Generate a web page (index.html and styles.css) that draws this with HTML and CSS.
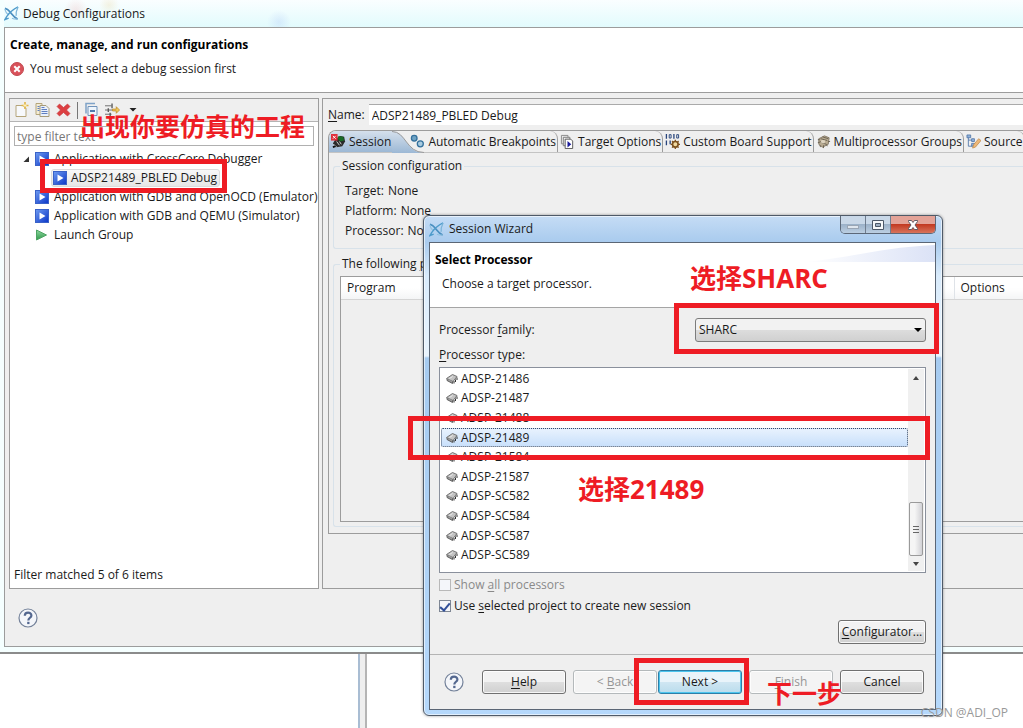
FILE: index.html
```html
<!DOCTYPE html>
<html lang="en">
<head>
    <meta charset="UTF-8">
    <meta name="viewport" content="width=device-width, initial-scale=1.0">
    <title>Debug Configurations</title>
    <link rel="stylesheet" href="styles.css">
</head>
<body>
    <!-- Shared icons -->
    <svg class="sprite" aria-hidden="true">
        <defs>
            <linearGradient id="blueFill" x1="0" y1="0" x2="1" y2="1">
                <stop offset="0" stop-color="#6f9cf0"/>
                <stop offset="1" stop-color="#0a35c8"/>
            </linearGradient>
            <linearGradient id="greenFill" x1="0" y1="0" x2="0" y2="1">
                <stop offset="0" stop-color="#8fd6a0"/>
                <stop offset="1" stop-color="#2f9a4a"/>
            </linearGradient>
        </defs>
        <symbol id="logo" viewBox="0 0 16 16">
            <path d="M1 2.500c3 .5 4 2 6 4.500s4 5.500 7.500 7" fill="none" stroke="#4a8fc0" stroke-width="1.800"/>
            <path d="M1 3c.5 3 2 5.500 4.500 6.500M8.500 13c2 1 4 1.200 6 1" fill="none" stroke="#8fc0df" stroke-width="1.200"/>
            <path d="M15 1C10 3.500 5.500 7.500 3 11l-2 3.500 4-1.500" fill="none" stroke="#4e9bcb" stroke-width="1.500"/>
            <path d="M15 1c-1.500 3-2.500 6-2 9.500" fill="none" stroke="#7ab4d8" stroke-width="1.300"/>
        </symbol>
        <symbol id="launch" viewBox="0 0 14 14">
            <rect x=".5" y=".5" width="13" height="13" fill="url(#blueFill)" stroke="#3a62c8"/>
            <path d="M4.500 3.500l6 3.500-6 3.500z" fill="#fff"/>
        </symbol>
        <symbol id="help" viewBox="0 0 20 20">
            <circle cx="10" cy="10" r="9" fill="#f4f6fa" stroke="#74829a" stroke-width="1.200"/>
            <path d="M6.800 7.800c0-4.200 6.600-4 6.600-.4 0 2.400-3.100 2.400-3.100 5.200" fill="none" stroke="#53678f" stroke-width="2.200"/>
            <rect x="9.200" y="13.800" width="2.300" height="2.300" fill="#53678f"/>
        </symbol>
        <symbol id="chip" viewBox="0 0 12 12">
            <path d="M.5 5.500l6-4 4.500 2-4 5z" fill="#c4c4c4" stroke="#6a6a6a" stroke-width=".9"/>
            <path d="M1 6v1.500l5.500 3V8.500" fill="#9a9a9a" stroke="#555" stroke-width=".9"/>
            <path d="M8 8v2.500M9.500 6.500V9M11 4.500V7" fill="none" stroke="#2e2e2e" stroke-width="1"/>
            <path d="M3.500 5.500l3-2" stroke="#f2f2f2" stroke-width=".9"/>
        </symbol>
    </svg>

    <div class="desktop">
        <main class="window">
            <header class="title-bar">
                <svg class="icon-logo"><use href="#logo"/></svg>
                <span>Debug Configurations</span>
            </header>

            <div class="window-body">
                <div class="banner">
                    <h1>Create, manage, and run configurations</h1>
                    <p class="error-line">
                        <svg class="icon-error" viewBox="0 0 14 14">
                            <circle cx="7" cy="7" r="6.500" fill="#d9515a" stroke="#c04a50"/>
                            <path d="M4.300 4.300l5.400 5.400M9.700 4.300l-5.400 5.400" stroke="#fff" stroke-width="2"/>
                        </svg>
                        You must select a debug session first
                    </p>
                </div>

                <div class="panes">
                    <!-- Configuration list -->
                    <section class="tree-pane">
                        <div class="toolbar">
                            <button aria-label="New configuration">
                                <svg viewBox="0 0 14 16"><path d="M1.500 3.500h7l3 3v8h-10z" fill="#f7f9fc" stroke="#b5a57a"/><path d="M10.500 0v7M7 3.500h7" stroke="#e2b545" stroke-width="1.600"/><path d="M10.500 2v3M9 3.500h3" stroke="#fff2b8"/></svg>
                            </button>
                            <button aria-label="Duplicate">
                                <svg viewBox="0 0 14 16"><path d="M.5 1.500h6v11h-6z" fill="#f3ecd5" stroke="#b5a57a"/><path d="M4.500 3.500h6l3 3v8h-9z" fill="#e9f0fb" stroke="#a79b78"/><path d="M6 7.500h5.500M6 9.500h6M6 11.500h6M6 5.500h3M2 4.500h2M2 6.500h2M2 8.500h2" stroke="#5f7fc0"/></svg>
                            </button>
                            <button aria-label="Delete">
                                <svg viewBox="0 0 14 16"><path d="M3 2l4 3.500L11 2l2.500 2.500L10 8l3.500 3.500L11 14l-4-3.500L3 14 .5 11.500 4 8 .5 4.500z" fill="#dc3f42" stroke="#c23336" stroke-width=".6"/></svg>
                            </button>
                            <span class="tool-divider"></span>
                            <button aria-label="Collapse all">
                                <svg viewBox="0 0 14 16"><path d="M1.500 11.500v-10h9" fill="none" stroke="#7fa3c8" stroke-width="1.500"/><path d="M3.500 4.500h9v9h-9z" fill="#eef5fc" stroke="#6f93bb"/><path d="M5.500 9h5" stroke="#1c4f8f" stroke-width="1.500"/></svg>
                            </button>
                            <button aria-label="Filter">
                                <svg viewBox="0 0 16 16"><path d="M0 3.500h7M0 8h8M0 12.500h7" stroke="#6a6a6a"/><path d="M7.500 1v5M5.500 11v5M3.500 6v4" stroke="#555" stroke-width="1.400"/><path d="M8 7h4V4.500l3.500 3.500-3.500 3.500V9H8z" fill="#f0c65b" stroke="#bb8a24" stroke-width=".8"/></svg>
                            </button>
                            <button aria-label="Filter menu">
                                <svg viewBox="0 0 14 16"><path d="M3 6h7l-3.500 3.500z" fill="#222"/></svg>
                            </button>
                        </div>

                        <input class="filter" type="text" placeholder="type filter text" aria-label="type filter text">

                        <ul class="tree">
                            <li>
                                <svg class="twisty" viewBox="0 0 8 8"><path d="M7 1.500V7H1.500z" fill="#333"/></svg>
                                <svg class="icon-node"><use href="#launch"/></svg>
                                <span>Application with CrossCore Debugger</span>
                            </li>
                            <li class="child">
                                <span class="picked">
                                    <svg class="icon-node"><use href="#launch"/></svg>
                                    ADSP21489_PBLED Debug
                                </span>
                            </li>
                            <li>
                                <svg class="icon-node"><use href="#launch"/></svg>
                                <span>Application with GDB and OpenOCD (Emulator)</span>
                            </li>
                            <li>
                                <svg class="icon-node"><use href="#launch"/></svg>
                                <span>Application with GDB and QEMU (Simulator)</span>
                            </li>
                            <li>
                                <svg class="icon-node" viewBox="0 0 14 14"><path d="M1.500 2l10 5-10 5z" fill="url(#greenFill)" stroke="#4da463"/></svg>
                                <span>Launch Group</span>
                            </li>
                        </ul>

                        <p class="tree-status">Filter matched 5 of 6 items</p>
                    </section>

                    <!-- Configuration details -->
                    <section class="detail-pane">
                        <div class="name-row">
                            <label for="configName"><u>N</u>ame:</label>
                            <input id="configName" type="text" value="ADSP21489_PBLED Debug">
                        </div>

                        <div class="tab-folder">
                            <div class="tabs" role="tablist">
                                <button class="tab active" role="tab" aria-selected="true">
                                    <svg viewBox="0 0 16 16"><path d="M5 5l5-3 4 1 1 5-3 5-6 1-4-4z" fill="#2a2a2a"/><path d="M8 2l5 1 1 4-4 1-3-3z" fill="#176b25"/><path d="M6 8l3 4M9 8l2 3M3 11l3 3" stroke="#ddd"/><path d="M2 14l3-1" stroke="#111" stroke-width="2"/><rect width="7" height="7" fill="#e0303c"/><path d="M2 2l3 3M5 2L2 5" stroke="#fff"/></svg>
                                    Session
                                    <svg class="tab-curve" viewBox="0 0 32 22" preserveAspectRatio="none"><path d="M0 0c14 0 14 22 32 22H0z" fill="url(#curveFill)"/><path d="M0 .5c14 0 14 21 32 21" fill="none" stroke="#9a9a9a"/><defs><linearGradient id="curveFill" x1="0" y1="0" x2="0" y2="1"><stop offset="0" stop-color="#d5e0ec"/><stop offset="1" stop-color="#9cb8d5"/></linearGradient></defs></svg>
                                </button>
                                <button class="tab after-active" role="tab">
                                    <svg viewBox="0 0 16 16"><circle cx="4.500" cy="4.500" r="3" fill="#6fa3c4" stroke="#35719c" stroke-width="1.400"/><circle cx="11" cy="10.500" r="3.200" fill="#a8cbe0" stroke="#35719c" stroke-width="1.400"/></svg>
                                    Automatic Breakpoints
                                </button>
                                <button class="tab" role="tab">
                                    <svg viewBox="0 0 16 16"><path d="M1.500 1.500h7v9h-7z" fill="#eee" stroke="#888"/><path d="M3.500 3.500h7v9h-7z" fill="#eee" stroke="#777"/><path d="M5.500 5.500h6l2 2v8h-8z" fill="#fff" stroke="#555"/><path d="M8 7.500l4 3.500-4 3.500z" fill="#1a1a9c"/></svg>
                                    Target Options
                                </button>
                                <button class="tab" role="tab">
                                    <svg viewBox="0 0 16 16"><path d="M1.500 0v5M9.500 0v5M1.500 7v5M5.500 7v4" stroke="#28447c" stroke-width="1.400"/><path d="M4.500.7h2v3.600h-2zM12.500.7h2v3.600h-2z" fill="none" stroke="#28447c"/><circle cx="11" cy="11" r="3" fill="#f0d9a0" stroke="#7c5220" stroke-width="1.800"/><path d="M11 6v2M11 14v2M6 11h2M14 11h2M7.500 7.500l1.500 1.500M13 13l1.500 1.500M14.500 7.500L13 9M9 13l-1.500 1.500" stroke="#7c5220" stroke-width="1.400"/></svg>
                                    Custom Board Support
                                </button>
                                <button class="tab" role="tab">
                                    <svg viewBox="0 0 16 16"><path d="M3 5l6-3 5 2-1 7-6 3-4-3z" fill="#b8aa90" stroke="#857a66"/><path d="M5 5l7 2M4 8l7 3M7 3l6 2M2 6h2M2 9h2M4 12l1 2M8 12v3M11 11l1 2M13 8h2" stroke="#6a6152"/><path d="M6 6l4 1-1 3-4-1z" fill="#ddd3bf"/></svg>
                                    Multiprocessor Groups
                                </button>
                                <button class="tab" role="tab">
                                    <svg viewBox="0 0 16 16"><path d="M2.500 2v11h4M2.500 6.500h4" fill="none" stroke="#5b7fae"/><path d="M1 1h4v3H1zM6 5h3v3H6zM6 10h3v3H6z" fill="#8fb0d8" stroke="#4a70a5" stroke-width=".8"/><path d="M7 15l1-3.500L13.500 5 16 7l-6 7z" fill="#edb878" stroke="#b9803f" stroke-width=".7"/></svg>
                                    Source
                                </button>
                            </div>

                            <div class="tab-page">
                                <fieldset class="group">
                                    <legend>Session configuration</legend>
                                    <dl class="facts">
                                        <div><dt>Target:</dt> <dd>None</dd></div>
                                        <div><dt>Platform:</dt> <dd>None</dd></div>
                                        <div><dt>Processor:</dt> <dd>None</dd></div>
                                    </dl>
                                </fieldset>
                                <fieldset class="group programs">
                                    <legend>The following <u>p</u>rograms</legend>
                                    <div class="grid-box">
                                        <table>
                                            <thead>
                                                <tr><th>Program</th><th class="options">Options</th></tr>
                                            </thead>
                                        </table>
                                    </div>
                                </fieldset>
                            </div>
                        </div>
                    </section>
                </div>

                <footer class="window-footer">
                    <button class="help-button" aria-label="Help"><svg><use href="#help"/></svg></button>
                </footer>
            </div>
        </main>

        <!-- Editor area behind the window -->
        <div class="workbench"><span class="sash"></span></div>

        <!-- Session Wizard -->
        <div class="dialog" role="dialog" aria-labelledby="wizardTitle">
            <header class="dialog-title">
                <svg class="icon-logo"><use href="#logo"/></svg>
                <span id="wizardTitle">Session Wizard</span>
                <div class="caption-buttons">
                    <button aria-label="Minimize"><svg viewBox="0 0 14 12"><rect x="1.500" y="6.500" width="11" height="3" fill="#dfe6ee" stroke="#9aa6b5"/></svg></button>
                    <button aria-label="Maximize"><svg viewBox="0 0 14 12"><path d="M1.500 1.500h11v9h-11z" fill="#f6f8fa" stroke="#4c5868"/><path d="M4.500 4.500h5v3h-5z" fill="#9fb0c4" stroke="#4c5868"/></svg></button>
                    <button class="close" aria-label="Close"><svg viewBox="0 0 14 12"><path d="M2.500 1.500h3L7 3.500l1.500-2h3v1L9 6l2.500 3.500v1h-3L7 8.500l-1.500 2h-3v-1L5 6 2.500 2.500z" fill="#fff" stroke="#54505a" stroke-width=".9"/></svg></button>
                </div>
            </header>

            <form class="dialog-client">
                <div class="dialog-banner">
                    <h2>Select Processor</h2>
                    <p>Choose a target processor.</p>
                    <svg class="swoosh" viewBox="0 0 130 19" preserveAspectRatio="none"><defs><linearGradient id="swooshFill"><stop offset="0" stop-color="#fff"/><stop offset="1" stop-color="#dbe2f6"/></linearGradient></defs><path d="M0 19C50 14 80 4 130 2v17z" fill="url(#swooshFill)"/></svg>
                </div>

                <div class="dialog-content">
                    <div class="family-row">
                        <label for="family">Processor <u>f</u>amily:</label>
                        <div class="select-box">
                            <select id="family"><option>SHARC</option></select>
                            <svg viewBox="0 0 8 4"><path d="M0 0h8L4 4z" fill="#000"/></svg>
                        </div>
                    </div>

                    <p class="list-label" id="typeLabel"><u>P</u>rocessor type:</p>
                    <div class="list-box">
                        <ul class="processors" role="listbox" aria-labelledby="typeLabel">
                            <li role="option"><svg><use href="#chip"/></svg>ADSP-21486</li>
                            <li role="option"><svg><use href="#chip"/></svg>ADSP-21487</li>
                            <li role="option"><svg><use href="#chip"/></svg>ADSP-21488</li>
                            <li role="option" class="selected" aria-selected="true"><svg><use href="#chip"/></svg>ADSP-21489</li>
                            <li role="option"><svg><use href="#chip"/></svg>ADSP-21584</li>
                            <li role="option"><svg><use href="#chip"/></svg>ADSP-21587</li>
                            <li role="option"><svg><use href="#chip"/></svg>ADSP-SC582</li>
                            <li role="option"><svg><use href="#chip"/></svg>ADSP-SC584</li>
                            <li role="option"><svg><use href="#chip"/></svg>ADSP-SC587</li>
                            <li role="option"><svg><use href="#chip"/></svg>ADSP-SC589</li>
                        </ul>
                        <div class="scrollbar">
                            <svg viewBox="0 0 8 4"><path d="M4 0l3 4H1z" fill="#444"/></svg>
                            <span class="thumb"></span>
                            <svg viewBox="0 0 8 4"><path d="M1 0h6L4 4z" fill="#444"/></svg>
                        </div>
                    </div>

                    <label class="check disabled"><input type="checkbox" disabled> <span>Show <u>a</u>ll processors</span></label>
                    <label class="check"><input type="checkbox" checked> <span>Use <u>s</u>elected project to create new session</span></label>

                    <div class="configurator-row">
                        <button type="button" class="button"><u>C</u>onfigurator...</button>
                    </div>
                </div>

                <div class="dialog-actions">
                    <button type="button" class="help-button" aria-label="Help"><svg><use href="#help"/></svg></button>
                    <button type="button" class="button"><u>H</u>elp</button>
                    <div class="step-buttons">
                        <button type="button" class="button" disabled>&lt; <u>B</u>ack</button>
                        <button type="button" class="button default">Next &gt;</button>
                    </div>
                    <button type="button" class="button" disabled><u>F</u>inish</button>
                    <button type="button" class="button">Cancel</button>
                </div>
            </form>
        </div>

        <!-- Callouts -->
        <div class="mark mark-project"></div>
        <div class="mark mark-family"></div>
        <div class="mark mark-type"></div>
        <div class="mark mark-next"></div>
        <p class="note note-project">出现你要仿真的工程</p>
        <p class="note note-family">选择SHARC</p>
        <p class="note note-type">选择21489</p>
        <p class="note note-next">下一步</p>
        <p class="watermark">CSDN @ADI_OP</p>
    </div>
</body>
</html>
```
FILE: styles.css
```css
:root {
    --face: #efefef;
    --line: #9c9c9c;
    --group-line: #d8e2ea;
    --text: #1a1a1a;
    --muted: #8a8a8a;
    --red: #ee1c24;
}

* {
    margin: 0;
    padding: 0;
    box-sizing: border-box;
}

body {
    font-family: "Open Sans", "Noto Sans CJK SC", sans-serif;
    font-size: 12px;
    line-height: 18px;
    color: var(--text);
    background: #fff;
}

button,
input,
select {
    font: inherit;
    color: inherit;
}

ul {
    list-style: none;
}

u {
    text-underline-offset: 2px;
}

svg {
    display: block;
    flex-shrink: 0;
}

.sprite {
    position: absolute;
    width: 0;
    height: 0;
}

.desktop {
    position: relative;
    display: flex;
    flex-direction: column;
    min-height: 100vh;
    overflow: hidden;
}

/* Main window */
.window {
    display: flex;
    flex-direction: column;
    height: 654px;
    padding: 0 0 5px 4px;
    border-bottom: 2px solid #8b8b8b;
    background: #f5ffff;
}

.title-bar {
    display: flex;
    align-items: center;
    gap: 4px;
    height: 27px;
    background:
        radial-gradient(circle at 72px 10px, rgba(240, 120, 120, 0.16), transparent 12px),
        radial-gradient(circle at 105px 5px, rgba(225, 190, 100, 0.18), transparent 10px),
        radial-gradient(circle at 275px 22px, rgba(110, 140, 240, 0.15), transparent 12px),
        linear-gradient(#fafeff, #e2fbfd);
}

.icon-logo {
    width: 15px;
    height: 15px;
}

.window-body {
    flex: 1;
    display: flex;
    flex-direction: column;
    border: 1px solid var(--line);
    border-right: 0;
    background: var(--face);
}

.banner {
    height: 65px;
    padding: 8px 5px;
    border-bottom: 1px solid var(--line);
    background: #fff;
}

h1,
h2 {
    font-size: 12px;
    line-height: 18px;
    color: #000;
}

.error-line {
    display: flex;
    align-items: center;
    gap: 6px;
    margin-top: 6px;
}

.icon-error {
    width: 14px;
    height: 14px;
}

.panes {
    flex: 1;
    display: flex;
    gap: 3px;
    padding: 5px 0 0 4px;
}

/* Tree pane */
.tree-pane {
    display: flex;
    flex-direction: column;
    width: 310px;
    border: 1px solid var(--line);
    background: #fff;
}

.toolbar {
    display: flex;
    align-items: center;
    gap: 6px;
    height: 23px;
    padding-left: 4px;
    border-bottom: 1px solid #b4b4b4;
    background: var(--face);
}

.toolbar button {
    border: 0;
    background: none;
}

.toolbar svg {
    width: 15px;
    height: 16px;
}

.tool-divider {
    width: 1px;
    height: 17px;
    background: #777;
}

.filter {
    height: 20px;
    margin: 4px 4px 3px;
    padding: 0 2px;
    border: 1px solid #b0b0b0;
}

.filter::placeholder {
    color: #777;
    opacity: 1;
}

.tree {
    flex: 1;
}

.tree li {
    display: flex;
    align-items: center;
    gap: 5px;
    height: 19px;
    padding-left: 25px;
    white-space: nowrap;
}

.tree li:first-child {
    padding-left: 12px;
}

.tree .child {
    padding-left: 41px;
}

.twisty {
    width: 8px;
    height: 8px;
}

.icon-node {
    width: 14px;
    height: 14px;
}

.picked {
    display: flex;
    align-items: center;
    gap: 4px;
    height: 18px;
    padding: 0 2px 0 1px;
    border: 1px solid #dcdcdc;
    border-radius: 3px;
    background: linear-gradient(#f8f8f8, #e6e6e6);
}

.tree-status {
    padding: 0 4px 4px;
}

/* Detail pane */
.detail-pane {
    flex: 1;
    display: flex;
    flex-direction: column;
    min-width: 0;
    padding: 5px 0 54px 5px;
    border: 1px solid var(--line);
    border-right: 0;
    overflow: hidden;
}

.name-row {
    display: flex;
    align-items: center;
    gap: 4px;
    height: 21px;
}

.name-row input {
    flex: 1;
    height: 21px;
    padding: 0 3px;
    border: 0;
    border-top: 1px solid #aaa;
    background: #fff;
}

.tab-folder {
    flex: 1;
    display: flex;
    flex-direction: column;
    margin-top: 5px;
    border: 1px solid var(--line);
    border-right: 0;
    border-top-left-radius: 8px;
    overflow: hidden;
}

.tabs {
    display: flex;
    height: 22px;
    border-bottom: 1px solid #c4c4c4;
}

.tab {
    display: flex;
    align-items: center;
    gap: 3px;
    padding: 0 1px 0 2px;
    border: 0;
    border-right: 1px solid var(--line);
    border-top-right-radius: 8px;
    background: none;
    white-space: nowrap;
}

.tab svg {
    width: 15px;
    height: 15px;
}

.tab.active {
    position: relative;
    border: 0;
    border-radius: 0;
    background: linear-gradient(#d5e0ec, #9cb8d5);
}

.tab .tab-curve {
    position: absolute;
    left: 100%;
    top: 0;
    width: 32px;
    height: 22px;
}

.tab.after-active {
    padding-left: 18px;
}

.tab-page {
    flex: 1;
    display: flex;
    flex-direction: column;
    gap: 6px;
    padding: 4px 0 6px 4px;
}

.group {
    min-width: 0;
    padding: 7px 0 8px 6px;
    border: 1px solid var(--group-line);
    border-right: 0;
    border-radius: 3px 0 0 3px;
}

.group legend {
    padding: 0 2px;
}

.facts {
    display: grid;
    gap: 2px;
    padding: 0 5px;
}

.facts div {
    display: flex;
    gap: 4px;
}

.programs {
    flex: 1;
    display: flex;
    padding: 3px 0 4px 6px;
}

.grid-box {
    flex: 1;
    border: 1px solid var(--line);
    border-right: 0;
}

table {
    width: 100%;
    border-collapse: collapse;
}

th {
    height: 22px;
    padding: 0 6px;
    border-bottom: 1px solid #d5d5d5;
    background: linear-gradient(#fff 50%, #f4f5f6);
    font-weight: normal;
    text-align: left;
}

th.options {
    width: 69px;
    border-left: 1px solid #dfe3e8;
}

.window-footer {
    display: flex;
    padding: 19px 13px 18px;
}

.help-button {
    width: 20px;
    height: 20px;
    border: 0;
    background: none;
}

.help-button svg {
    width: 20px;
    height: 20px;
}

.workbench {
    flex: 1;
    display: flex;
    padding-left: 358px;
    background: #fff;
}

.sash {
    width: 9px;
    border-left: 2px solid #a9bdd3;
    border-right: 2px solid #b5b5b5;
    background: #efefef;
}

/* Session Wizard */
.dialog {
    position: absolute;
    left: 423px;
    top: 215px;
    width: 520px;
    padding: 0 6px 5px 5px;
    border: 1px solid #4f5a68;
    border-radius: 6px;
    background: linear-gradient(#c5dcf5 0, #a9cbee 26px, #d9ebfb 60px, #e8f3fd 140px, #a6cbf0 142px, #b5d8fb);
    box-shadow: inset 0 0 0 1px rgba(255, 255, 255, 0.6), 0 0 3px rgba(0, 0, 0, 0.4);
}

.dialog-title {
    display: flex;
    align-items: center;
    gap: 5px;
    height: 26px;
}

.caption-buttons {
    display: flex;
    align-self: flex-start;
    margin-left: auto;
    border: 1px solid #5c6878;
    border-top: 0;
    border-radius: 0 0 5px 5px;
    overflow: hidden;
}

.caption-buttons button {
    display: flex;
    align-items: center;
    justify-content: center;
    width: 25px;
    height: 17px;
    border: 0;
    border-right: 1px solid #6f7d8f;
    background: linear-gradient(#c9d8e8 45%, #9cb2c9 50%, #bccfe2);
}

.caption-buttons .close {
    width: 44px;
    border-right: 0;
    background: linear-gradient(#e3a398 45%, #c23a22 50%, #d8745c);
}

.caption-buttons svg {
    width: 14px;
    height: 12px;
}

.dialog-client {
    border: 1px solid #5b6675;
    background: var(--face);
}

.dialog-banner {
    position: relative;
    height: 65px;
    padding: 8px 5px;
    border-bottom: 1px solid #a5a5a5;
    background: #fff;
}

.dialog-banner p {
    margin-top: 6px;
    padding-left: 7px;
}

.swoosh {
    position: absolute;
    top: 0;
    right: 0;
    width: 130px;
    height: 19px;
}

.dialog-content {
    padding: 10px 9px;
}

.family-row {
    display: flex;
    align-items: center;
    justify-content: space-between;
}

.select-box {
    position: relative;
    width: 231px;
}

.select-box select {
    width: 100%;
    height: 24px;
    padding: 0 3px;
    border: 1px solid #7c7c7c;
    border-radius: 3px;
    background: linear-gradient(#f2f2f2 48%, #dcdcdc 52%, #d0d0d0);
    appearance: none;
}

.select-box svg {
    position: absolute;
    right: 4px;
    top: 10px;
    width: 8px;
    height: 4px;
    pointer-events: none;
}

.list-label {
    margin: 4px 0 3px;
}

.list-box {
    display: flex;
    height: 206px;
    padding: 1px;
    border: 1px solid #8a909c;
    background: #fff;
}

.processors {
    flex: 1;
    display: grid;
    grid-auto-rows: 1fr;
    padding-bottom: 6px;
    line-height: 16px;
}

.processors li {
    display: flex;
    align-items: center;
    gap: 3px;
    padding-left: 4px;
    border: 1px solid transparent;
    border-radius: 2px;
}

.processors .selected {
    border: 1px dotted #3c4c66;
    background: linear-gradient(#e8f2fe, #c9e0fb);
}

.processors svg {
    width: 12px;
    height: 12px;
}

.scrollbar {
    display: flex;
    flex-direction: column;
    align-items: center;
    width: 16px;
    padding: 7px 0 5px;
    background: #f0f0f0;
}

.scrollbar svg {
    width: 8px;
    height: 4px;
}

.thumb {
    width: 14px;
    height: 54px;
    margin: auto 0 6px;
    border: 1px solid #9a9a9a;
    border-radius: 2px;
    background:
        repeating-linear-gradient(#666 0 1px, transparent 1px 3px) center / 6px 7px no-repeat,
        linear-gradient(90deg, #f5f5f5 40%, #d2d2d6);
}

.check {
    display: flex;
    align-items: center;
    gap: 3px;
    margin-top: 3px;
}

.check input {
    display: grid;
    place-items: center;
    width: 12px;
    height: 12px;
    border: 1px solid #7f8794;
    background: #f4f6fa;
    appearance: none;
}

.check input:checked::before {
    content: "";
    width: 4px;
    height: 8px;
    border: solid #31509a;
    border-width: 0 2px 2px 0;
    transform: rotate(40deg);
}

.check input:disabled {
    border-color: #b9b9b9;
}

.check.disabled {
    color: var(--muted);
}

.button {
    width: 85px;
    height: 24px;
    border: 1px solid #707070;
    border-radius: 3px;
    background: linear-gradient(#f2f2f2 48%, #dedede 52%, #d0d0d0);
    box-shadow: inset 0 0 0 1px rgba(255, 255, 255, 0.8);
    white-space: nowrap;
}

.button:disabled {
    border-color: #b4b9bb;
    background: #f4f4f4;
    color: #969696;
}

.button.default {
    border-color: #2c7fa8;
    background: linear-gradient(#e9f4fa 48%, #cfe6f2 52%, #b9dcec);
    box-shadow: inset 0 0 0 1px #4cc5ee;
}

.configurator-row {
    display: flex;
    justify-content: flex-end;
    margin-top: 5px;
}

.configurator-row .button {
    width: 88px;
}

.dialog-actions {
    display: flex;
    align-items: center;
    gap: 7px;
    padding: 15px 11px 15px 14px;
    border-top: 1px solid #b4b4b4;
}

.dialog-actions .button {
    width: 84px;
}

.dialog-actions .help-button {
    margin-right: auto;
}

.step-buttons {
    display: flex;
    gap: 1px;
}

/* Callouts */
.mark {
    position: absolute;
    border: 5px solid var(--red);
}

.mark-project {
    left: 40px;
    top: 159px;
    width: 187px;
    height: 34px;
}

.mark-family {
    left: 674px;
    top: 303px;
    width: 265px;
    height: 51px;
}

.mark-type {
    left: 408px;
    top: 416px;
    width: 522px;
    height: 44px;
}

.mark-next {
    left: 634px;
    top: 658px;
    width: 115px;
    height: 47px;
}

.note {
    position: absolute;
    font-size: 25px;
    line-height: 30px;
    font-weight: bold;
    color: var(--red);
    white-space: nowrap;
}

.note-project {
    left: 80px;
    top: 111px;
}

.note-family {
    left: 690px;
    top: 263px;
    font-size: 26px;
}

.note-type {
    left: 578px;
    top: 474px;
    font-size: 26px;
}

.note-next {
    left: 767px;
    top: 678px;
}

.watermark {
    position: absolute;
    right: 15px;
    bottom: 6px;
    color: #999;
}
```
